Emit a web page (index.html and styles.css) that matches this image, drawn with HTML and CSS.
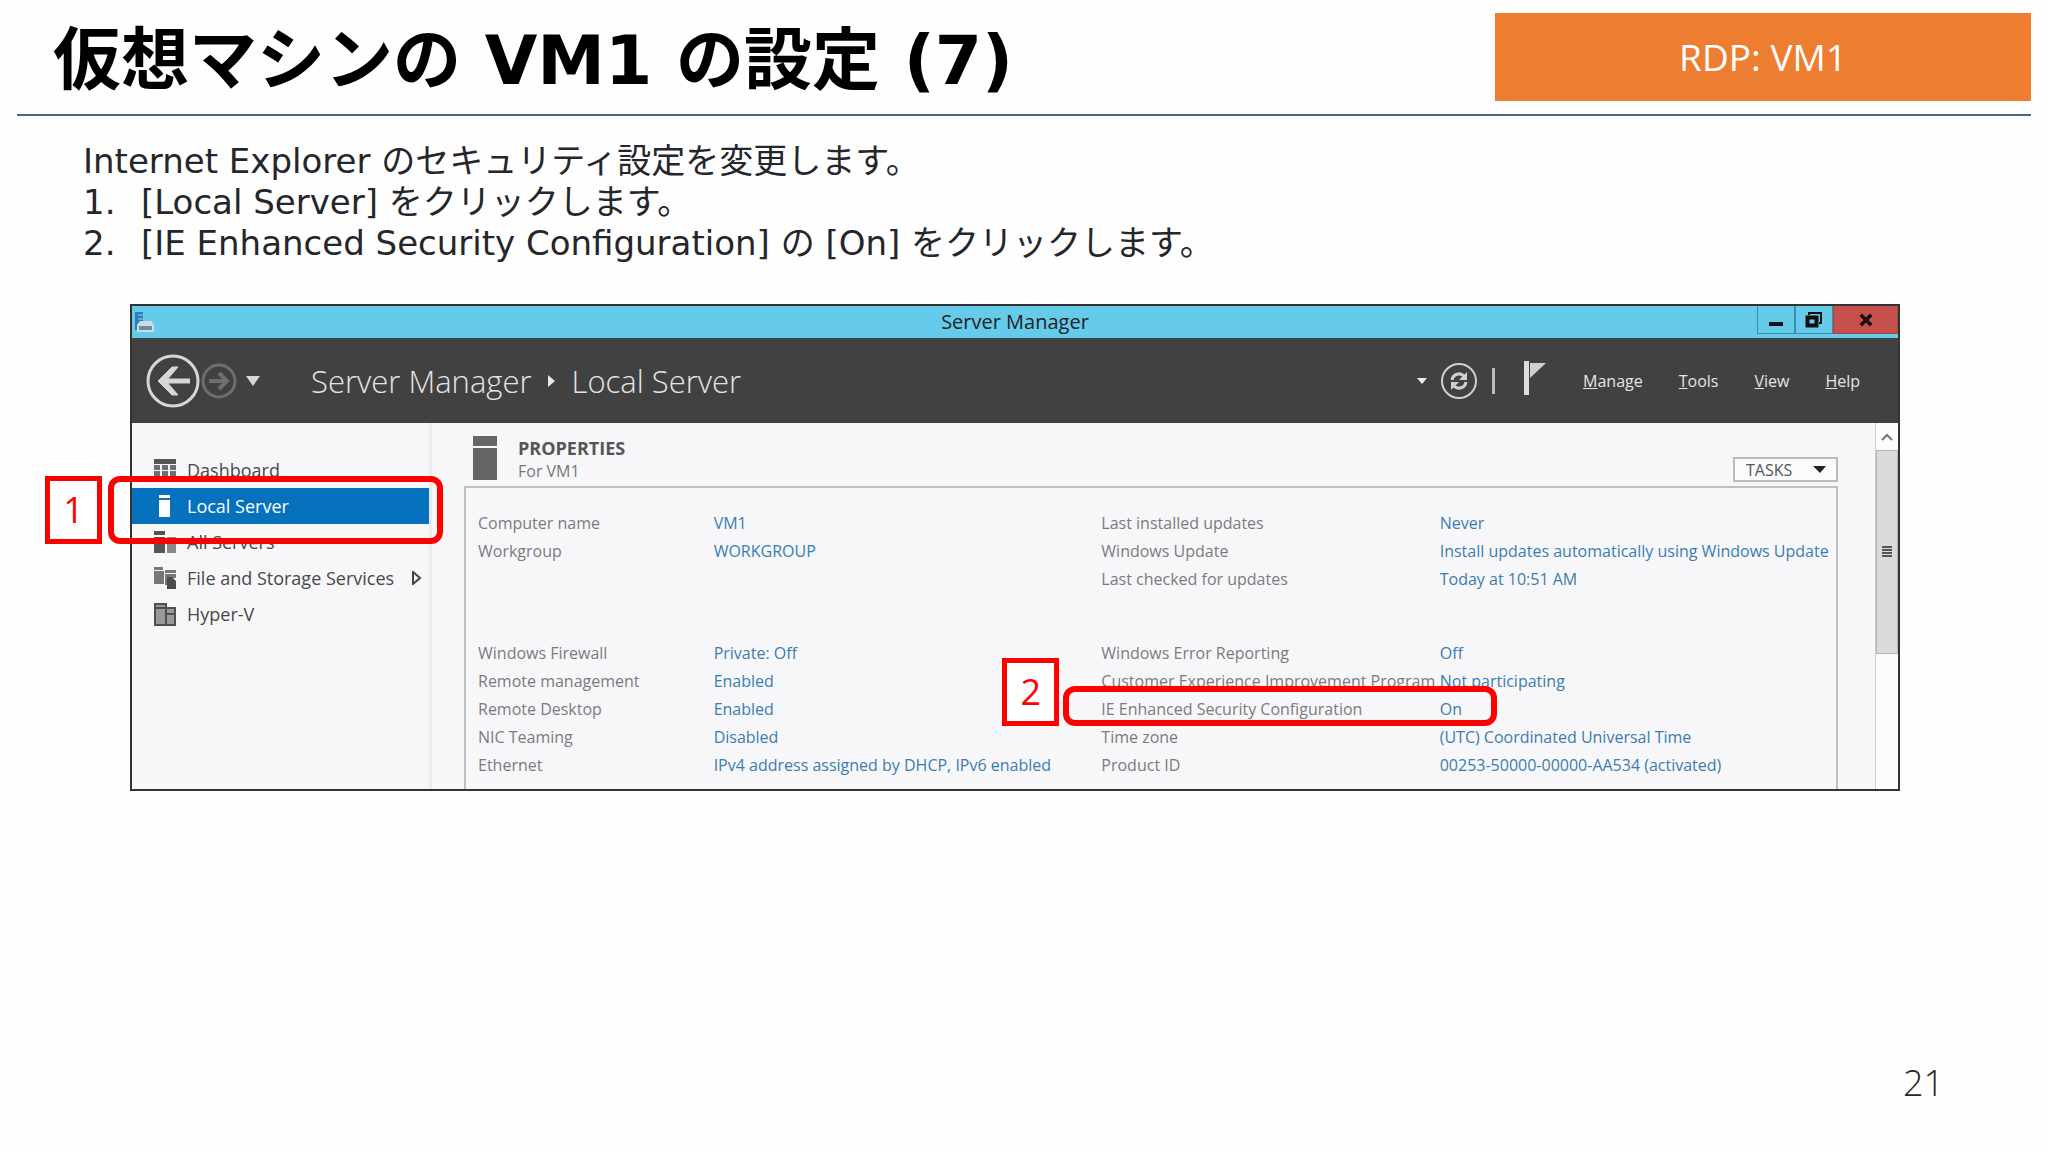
FILE: index.html
```html
<!DOCTYPE html>
<html lang="ja">
<head>
  <meta charset="UTF-8">
  <meta name="viewport" content="width=device-width, initial-scale=1.0">
  <title>仮想マシンの VM1 の設定 (7)</title>
  <link rel="stylesheet" href="styles.css">
</head>
<body>
  <header class="slide-header">
    <h1>仮想マシンの VM1 の設定 (7)</h1>
    <div class="tag">RDP: VM1</div>
  </header>

  <main>
    <section class="steps">
      <p>Internet Explorer のセキュリティ設定を変更します。</p>
      <ol>
        <li><span class="num">1.</span>[Local Server] をクリックします。</li>
        <li><span class="num">2.</span>[IE Enhanced Security Configuration] の [On] をクリックします。</li>
      </ol>
    </section>

    <!-- Server Manager window -->
    <section class="window">
      <div class="titlebar">
        <svg class="app-icon" width="22" height="24" viewBox="0 0 22 24">
          <path d="M2 2h8v12H5v6H2z" fill="#2b7fb8"/>
          <path d="M5 5h5M5 9h5" stroke="#8fd0ec" stroke-width="1"/>
          <path d="M4 15l3-4h11l3 4v7H4z" fill="#c9dde6"/>
          <path d="M6 16h13v4H6z" fill="#6f8c99"/>
        </svg>
        <span class="window-title">Server Manager</span>
        <div class="window-buttons">
          <button class="min" aria-label="Minimize">
            <svg width="16" height="16" viewBox="0 0 16 16"><path d="M1 10h14v4H1z" fill="#111"/></svg>
          </button>
          <button class="restore" aria-label="Restore">
            <svg width="18" height="16" viewBox="0 0 18 16"><path d="M4 3V1h12v10h-2" fill="none" stroke="#111" stroke-width="2"/><path d="M2.500 5.500h9v8h-9z" fill="none" stroke="#111" stroke-width="4"/></svg>
          </button>
          <button class="close" aria-label="Close">
            <svg width="14" height="14" viewBox="0 0 16 16"><path d="M2 2l12 12M14 2L2 14" stroke="#1a1010" stroke-width="4"/></svg>
          </button>
        </div>
      </div>

      <div class="toolbar">
        <button class="back" aria-label="Back">
          <svg width="54" height="54" viewBox="0 0 54 54" fill="none" stroke="#d6d6d6">
            <circle cx="27" cy="27" r="25" stroke-width="3"/>
            <path d="M44 27H15" stroke-width="5"/>
            <path d="M32 13H26L12 27l14 14h6L20 27z" fill="#d6d6d6" stroke-width="1"/>
          </svg>
        </button>
        <button class="forward" aria-label="Forward">
          <svg width="36" height="36" viewBox="0 0 36 36" fill="none" stroke="#6e6e6e">
            <circle cx="18" cy="18" r="16" stroke-width="3"/>
            <path d="M8 18h18M18 10l8 8-8 8" stroke-width="4"/>
          </svg>
        </button>
        <button class="history" aria-label="History">
          <svg width="14" height="10" viewBox="0 0 14 10"><path d="M0 0h14L7 10z" fill="#d6d6d6"/></svg>
        </button>
        <nav class="breadcrumb">
          <a href="#">Server Manager</a>
          <svg width="8" height="12" viewBox="0 0 8 12"><path d="M0 0l7 6-7 6z" fill="#e8e8e8"/></svg>
          <a href="#">Local Server</a>
        </nav>
        <div class="tools">
          <button aria-label="Refresh options">
            <svg width="10" height="6" viewBox="0 0 10 6"><path d="M0 0h10L5 6z" fill="#eee"/></svg>
          </button>
          <button class="refresh" aria-label="Refresh">
            <svg width="38" height="38" viewBox="0 0 38 38" fill="none" stroke="#d0d0d0">
              <circle cx="19" cy="19" r="17" stroke-width="2"/>
              <path d="M12 18c1-6 8-8 12-4" stroke-width="3"/>
              <path d="M27 10v8h-8z" fill="#d0d0d0" stroke="none"/>
              <path d="M26 20c-1 6-8 8-12 4" stroke-width="3"/>
              <path d="M11 28v-8h8z" fill="#d0d0d0" stroke="none"/>
            </svg>
          </button>
          <span class="divider"></span>
          <button class="flag" aria-label="Notifications">
            <svg width="24" height="36" viewBox="0 0 24 36"><path d="M1 0h5v34H1z" fill="#ddd"/><path d="M7 2h16L7 17z" fill="#d0d0d0"/></svg>
          </button>
          <div class="menu">
            <button><u>M</u>anage</button>
            <button><u>T</u>ools</button>
            <button><u>V</u>iew</button>
            <button><u>H</u>elp</button>
          </div>
        </div>
      </div>

      <div class="content">
        <nav class="sidebar">
          <a href="#">
            <svg width="24" height="24" viewBox="0 0 24 24" fill="#707070"><path d="M1 1h22v5H1z" fill="#555"/><path d="M1 7h6v5H1zM9 7h6v5H9zM17 7h6v5h-6zM1 13h6v5H1zM9 13h6v5H9zM17 13h6v5h-6zM1 19h6v4H1zM9 19h6v4H9zM17 19h6v4h-6z"/></svg>
            Dashboard
          </a>
          <a href="#" class="active">
            <svg width="24" height="24" viewBox="0 0 24 24" fill="#fff"><path d="M6 1h11v3H6zM6 6h11v17H6z"/></svg>
            Local Server
          </a>
          <a href="#">
            <svg width="24" height="24" viewBox="0 0 24 24" fill="#555"><path d="M1 1h11v4H1zM1 7h11v16H1z"/><path d="M14 7h9v3h-9zM14 12h9v11h-9z" fill="#888"/></svg>
            All Servers
          </a>
          <a href="#">
            <svg width="24" height="24" viewBox="0 0 24 24" fill="#777"><path d="M1 1h9v3H1zM1 5h10v13H1zM12 4h11v3H12zM12 8h11v4H12z"/><path d="M12 12h2v7h-2z"/><path d="M14 11h5l4 4v8h-9z" fill="#4c4c4c"/></svg>
            File and Storage Services
            <svg class="expand" width="10" height="14" viewBox="0 0 10 14"><path d="M1 1l7 6-7 6z" fill="none" stroke="#444" stroke-width="2"/></svg>
          </a>
          <a href="#">
            <svg width="24" height="24" viewBox="0 0 24 24"><path d="M2 1h11v22H2zM13 5h9v18h-9z" fill="#999"/><path d="M2 2h11v21H2zM13 6h9v17h-9zM2 6h11M13 12h9" fill="none" stroke="#505050" stroke-width="2"/></svg>
            Hyper-V
          </a>
          <span class="callout callout-1">1</span>
          <span class="highlight highlight-1"></span>
        </nav>

        <div class="properties">
          <div class="properties-header">
            <svg width="24" height="44" viewBox="0 0 24 44" fill="#666"><path d="M0 0h24v10H0zM0 12h24v32H0z"/></svg>
            <div class="heading">
              <h2>PROPERTIES</h2>
              <p>For VM1</p>
            </div>
            <button class="tasks">TASKS
              <svg width="13" height="7" viewBox="0 0 13 7"><path d="M0 0h13L7 7z" fill="#222"/></svg>
            </button>
          </div>

          <div class="panel">
            <table>
              <tbody>
                <tr>
                  <th>Computer name</th><td><a href="#">VM1</a></td>
                  <th>Last installed updates</th><td><a href="#">Never</a></td>
                </tr>
                <tr>
                  <th>Workgroup</th><td><a href="#">WORKGROUP</a></td>
                  <th>Windows Update</th><td><a href="#">Install updates automatically using Windows Update</a></td>
                </tr>
                <tr>
                  <th></th><td></td>
                  <th>Last checked for updates</th><td><a href="#">Today at 10:51 AM</a></td>
                </tr>
              </tbody>
              <tbody class="group">
                <tr>
                  <th>Windows Firewall</th><td><a href="#">Private: Off</a></td>
                  <th>Windows Error Reporting</th><td><a href="#">Off</a></td>
                </tr>
                <tr>
                  <th>Remote management</th><td><a href="#">Enabled</a></td>
                  <th>Customer Experience Improvement Program</th><td><a href="#">Not participating</a></td>
                </tr>
                <tr>
                  <th>Remote Desktop</th><td><a href="#">Enabled</a></td>
                  <th class="marked">IE Enhanced Security Configuration
                    <span class="callout callout-2">2</span>
                    <span class="highlight highlight-2"></span>
                  </th><td><a href="#">On</a></td>
                </tr>
                <tr>
                  <th>NIC Teaming</th><td><a href="#">Disabled</a></td>
                  <th>Time zone</th><td><a href="#">(UTC) Coordinated Universal Time</a></td>
                </tr>
                <tr>
                  <th>Ethernet</th><td><a href="#">IPv4 address assigned by DHCP, IPv6 enabled</a></td>
                  <th>Product ID</th><td><a href="#">00253-50000-00000-AA534 (activated)</a></td>
                </tr>
              </tbody>
            </table>
          </div>
        </div>

        <div class="scrollbar">
          <button aria-label="Scroll up">
            <svg width="12" height="8" viewBox="0 0 12 8"><path d="M1 7l5-5 5 5" fill="none" stroke="#777" stroke-width="2"/></svg>
          </button>
          <div class="thumb">
            <svg width="10" height="12" viewBox="0 0 10 12"><path d="M0 1h10M0 4h10M0 7h10M0 10h10" stroke="#555" stroke-width="2"/></svg>
          </div>
        </div>
      </div>
    </section>
  </main>

  <footer>21</footer>
</body>
</html>
```

FILE: styles.css
```css
* {
  box-sizing: border-box;
}
body {
  margin: 0;
  min-height: 100vh;
  display: flex;
  flex-direction: column;
  background-color: #fefefe;
  font-family: "DejaVu Sans", "Noto Sans CJK JP", sans-serif;
  color: #24262b;
}
h1, h2, p, ol {
  margin: 0;
  padding: 0;
}
a {
  color: inherit;
  text-decoration: none;
}
button {
  padding: 0;
  border: none;
  background: none;
  color: inherit;
  font: inherit;
  cursor: pointer;
}
svg {
  display: block;
  flex: none;
}

/* slide header */
.slide-header {
  display: flex;
  justify-content: space-between;
  margin: 0 17px;
  padding: 13px 0;
  border-bottom: 2px solid #4a6580;
}
h1 {
  padding: 8px 0 0 36px;
  font-size: 68px;
  line-height: 80px;
  font-weight: bold;
  color: #000;
  white-space: nowrap;
}
.tag {
  flex: 0 1 536px;
  background-color: #ed7d31;
  color: #fff;
  font-family: "Open Sans", sans-serif;
  font-size: 37px;
  line-height: 88px;
  text-align: center;
}
.steps {
  padding: 25px 83px 0;
  font-size: 34px;
  line-height: 41px;
}
.steps li {
  display: flex;
}
.num {
  flex: 0 0 58px;
}

/* window */
.window {
  margin: 40px 148px 0 130px;
  border: 2px solid #333;
  background-color: #f7f7fa;
  font-family: "Open Sans", sans-serif;
}
.titlebar {
  display: flex;
  justify-content: space-between;
  height: 32px;
  background-color: #66caeb;
}
.app-icon, .window-buttons {
  flex: none;
}
.app-icon {
  margin: 4px 118px 0 1px;
}
.window-title {
  font-size: 20px;
  line-height: 32px;
  color: #222;
}
.window-buttons {
  display: flex;
  height: 28px;
}
.window-buttons button {
  display: flex;
  align-items: center;
  justify-content: center;
  width: 38px;
  border: 1px solid #3c8eb0;
  border-top: none;
}
.window-buttons .close {
  width: 65px;
  background-color: #c6514c;
  border-color: #a34a48;
}
.toolbar {
  display: flex;
  align-items: center;
  height: 85px;
  padding: 0 38px 0 14px;
  background-color: #414142;
  color: #e4e4e4;
}
.forward {
  margin-left: 1px;
}
.history {
  margin: 0 51px 0 9px;
}
.breadcrumb {
  display: flex;
  align-items: center;
  gap: 16px;
  font-size: 31px;
  font-weight: 300;
  white-space: nowrap;
}
.tools {
  display: flex;
  align-items: center;
  margin-left: auto;
}
.refresh {
  margin: 0 14px 0 13px;
}
.divider {
  width: 3px;
  height: 26px;
  background-color: #bbb;
}
.flag {
  margin: 0 36px 4px 28px;
}
.menu {
  display: flex;
  gap: 36px;
  font-size: 16px;
}

.content {
  display: flex;
}
.sidebar {
  position: relative;
  flex: 0 0 300px;
  padding-top: 29px;
  border-right: 3px solid #ebebee;
  font-size: 18px;
  color: #484848;
}
.sidebar a {
  display: flex;
  align-items: center;
  gap: 10px;
  height: 36px;
  padding-left: 21px;
  white-space: nowrap;
}
.sidebar .active {
  background-color: #0672bd;
  color: #fff;
}
.expand {
  margin-left: 8px;
}
.properties {
  flex: 1;
  min-width: 0;
  display: flex;
  flex-direction: column;
  padding: 13px 37px 0 32px;
}
.properties-header {
  display: flex;
  gap: 21px;
  height: 50px;
  padding-left: 9px;
}
.heading {
  flex: 1;
  font-size: 16px;
  line-height: 23px;
  color: #777;
}
h2 {
  font-size: 18px;
  line-height: 24px;
  color: #555;
}
.tasks {
  display: flex;
  align-items: center;
  justify-content: space-between;
  width: 105px;
  height: 25px;
  margin-top: 21px;
  padding: 0 10px 0 11px;
  border: 2px solid #bbb;
  background-color: #fbfbfc;
  font-size: 16px;
  color: #555;
}
.panel {
  flex: 1;
  padding: 21px 0 10px;
  border: 2px solid #bfbfc2;
  border-bottom: none;
}
table {
  width: 100%;
  table-layout: fixed;
  border-collapse: collapse;
  font-size: 16px;
  line-height: 28px;
  white-space: nowrap;
}
th, td {
  height: 28px;
  padding: 0 0 0 12px;
  text-align: left;
}
th {
  width: 17.2%;
  font-weight: normal;
  color: #7b7b7e;
}
td {
  color: #3a7db0;
}
td:nth-child(2) {
  width: 28.3%;
}
th:nth-child(3) {
  width: 24.7%;
}
.group tr:first-child > * {
  padding-top: 46px;
}
.marked {
  position: relative;
}
.scrollbar {
  flex: 0 0 23px;
  border-left: 1px solid #ccc;
  background-color: #fcfcfd;
}
.scrollbar button {
  display: flex;
  align-items: center;
  justify-content: center;
  width: 100%;
  height: 27px;
}
.thumb {
  display: flex;
  align-items: center;
  justify-content: center;
  height: 204px;
  border: 1px solid #b5b5b8;
  background-color: #dadadd;
}

/* red marks over the window */
.callout {
  position: absolute;
  width: 57px;
  height: 68px;
  border: 5px solid #f00;
  background-color: #fff;
  font-size: 36px;
  line-height: 58px;
  text-align: center;
  color: #f00;
}
.highlight {
  position: absolute;
  border: 6px solid #f00;
  border-radius: 12px;
  pointer-events: none;
}
.callout-1 {
  left: -87px;
  top: 53px;
}
.highlight-1 {
  left: -24px;
  top: 53px;
  width: 335px;
  height: 68px;
}
.callout-2 {
  left: -87px;
  top: -37px;
}
.highlight-2 {
  left: -26px;
  top: -9px;
  width: 434px;
  height: 40px;
}

footer {
  margin-top: auto;
  padding: 0 104px 42px;
  font-family: "Open Sans", sans-serif;
  font-size: 36px;
  line-height: 54px;
  font-weight: 300;
  text-align: right;
}
```
